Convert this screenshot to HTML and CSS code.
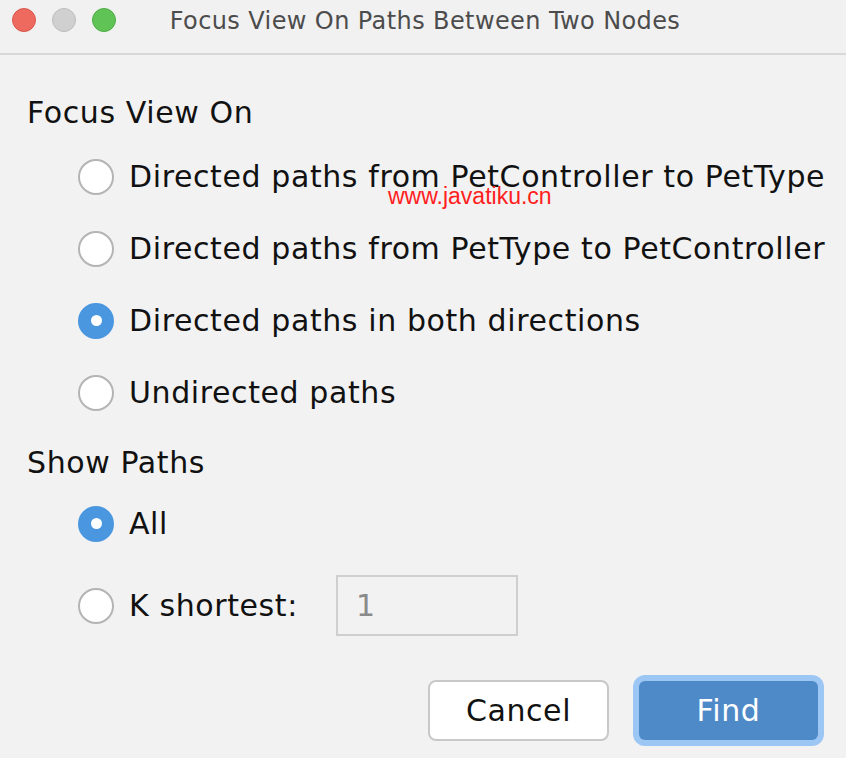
FILE: index.html
```html
<!DOCTYPE html>
<html>
<head>
<meta charset="utf-8">
<link rel="stylesheet" href="styles.css">
</head>
<body>
<div class="window">
  <div class="titlebar">
    <div class="lights">
      <span class="light red"></span>
      <span class="light gray"></span>
      <span class="light green"></span>
    </div>
    <div class="title">Focus View On Paths Between Two Nodes</div>
  </div>
  <div class="content">
    <div class="section-title">Focus View On</div>
    <div class="options">
      <div class="row"><span class="radio"></span><span class="label">Directed paths from PetController to PetType</span></div>
      <div class="row"><span class="radio"></span><span class="label">Directed paths from PetType to PetController</span></div>
      <div class="row"><span class="radio checked"></span><span class="label">Directed paths in both directions</span></div>
      <div class="row"><span class="radio"></span><span class="label">Undirected paths</span></div>
    </div>
    <div class="section-title second">Show Paths</div>
    <div class="options options-second">
      <div class="row"><span class="radio checked"></span><span class="label">All</span></div>
      <div class="row kshort"><span class="radio"></span><span class="label">K shortest:</span><div class="field">1</div></div>
    </div>
    <div class="buttons">
      <div class="btn cancel">Cancel</div>
      <div class="btn-focus"><div class="btn find">Find</div></div>
    </div>
  </div>
  <div class="watermark">www.javatiku.cn</div>
</div>
</body>
</html>
```
FILE: styles.css
```css
html, body {
  margin: 0;
  padding: 0;
  background: #f2f2f2;
}
.window {
  position: relative;
  width: 846px;
  height: 758px;
  background: #f2f2f2;
  font-family: "DejaVu Sans", sans-serif;
  color: #111;
  overflow: hidden;
}
.titlebar {
  height: 53px;
  border-bottom: 2px solid #d8d8d8;
  background: #f1f1f1;
  display: flex;
  align-items: center;
  position: relative;
}
.lights {
  display: flex;
  gap: 16px;
  padding-left: 12px;
  margin-top: -14px;
}
.light {
  width: 24px;
  height: 24px;
  border-radius: 50%;
  box-sizing: border-box;
}
.red { background: #ee6a5f; border: 1px solid #d9574d; }
.gray { background: #d0d0d0; border: 1px solid #bdbdbd; }
.green { background: #5fc455; border: 1px solid #4eac45; }
.title {
  position: absolute;
  left: 0;
  right: 0;
  top: 7px;
  text-align: center;
  font-size: 24px;
  letter-spacing: 0.4px;
  color: #4c4c4c;
  padding-left: 4px;
}
.content {
  padding: 40px 0 0 27px;
}
.section-title {
  font-size: 30px;
  letter-spacing: 0.6px;
  line-height: 36px;
}
.section-title.second {
  margin-top: 34px;
}
.options {
  padding-left: 51px;
  display: flex;
  flex-direction: column;
  gap: 35px;
  margin-top: 27px;
}
.options-second {
  margin-top: 24px;
}
.row {
  display: flex;
  align-items: center;
  height: 37px;
}
.radio {
  width: 36px;
  height: 36px;
  border-radius: 50%;
  box-sizing: border-box;
  background: #fff;
  border: 2px solid #b4b4b4;
  margin-right: 15px;
  flex: none;
  position: relative;
}
.radio.checked {
  background: #4a97e0;
  border-color: #4a97e0;
}
.radio.checked::after {
  content: "";
  position: absolute;
  left: 50%;
  top: 50%;
  width: 11px;
  height: 11px;
  margin: -5.5px 0 0 -5.5px;
  border-radius: 50%;
  background: #fff;
}
.label {
  font-size: 30px;
  letter-spacing: 0.6px;
  white-space: nowrap;
}
.kshort {
  margin-top: 10px;
}
.field {
  margin-left: 38px;
  width: 182px;
  height: 61px;
  box-sizing: border-box;
  border: 2px solid #cfcfcf;
  background: #f2f2f2;
  color: #8a8a8a;
  font-size: 30px;
  display: flex;
  align-items: center;
  padding-left: 18px;
}
.buttons {
  display: flex;
  justify-content: flex-end;
  align-items: center;
  gap: 24px;
  padding-right: 22px;
  margin-top: 51px;
}
.btn {
  font-size: 30px;
  letter-spacing: 0.6px;
  display: flex;
  align-items: center;
  justify-content: center;
  box-sizing: border-box;
  border-radius: 8px;
}
.cancel {
  width: 181px;
  height: 61px;
  background: #fff;
  border: 2px solid #c8c8c8;
  color: #111;
}
.btn-focus {
  padding: 6px;
  border-radius: 12px;
  background: #9cc6f4;
}
.find {
  width: 179px;
  height: 59px;
  background: #4e89c8;
  color: #fff;
  border-radius: 6px;
}
.watermark {
  position: absolute;
  left: 388px;
  top: 185px;
  font-family: "Liberation Sans", sans-serif;
  font-size: 23px;
  line-height: 22px;
  color: #ff2020;
}
```
